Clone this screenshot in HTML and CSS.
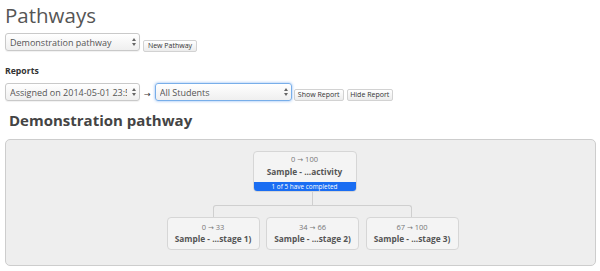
FILE: index.html
```html
<!DOCTYPE html>
<html lang="en">
  <head>
    <meta charset="UTF-8" />
    <title>Pathways</title>
    <link rel="stylesheet" href="styles.css">
  </head>
  <body>
    <h1 class="title">Pathways</h1>

    <div class="row row-pathway">
      <div class="select-wrap wide">
        <select class="select">
          <option>Demonstration pathway</option>
        </select>
        <span class="updown"></span>
      </div>
      <button type="button" class="btn btn-new">New Pathway</button>
    </div>

    <h4 class="label">Reports</h4>

    <div class="row row-report">
      <div class="select-wrap wide">
        <select class="select">
          <option>Assigned on 2014-05-01 23:59</option>
        </select>
        <span class="updown"></span>
      </div>
      <span class="arrow">&rarr;</span>
      <div class="select-wrap students">
        <select class="select focused">
          <option>All Students</option>
        </select>
        <span class="updown"></span>
      </div>
      <button type="button" class="btn btn-show">Show Report</button>
      <button type="button" class="btn btn-hide">Hide Report</button>
    </div>

    <h2 class="pathway-name">Demonstration pathway</h2>

    <div class="panel">
      <div class="tree">
        <div class="node node-root">
          <div class="range">0 <span class="to">&rarr;</span> 100</div>
          <div class="name">Sample - ...activity</div>
          <div class="progress">1 of 5 have completed</div>
        </div>
        <div class="stem"></div>
        <div class="bracket"></div>
        <div class="children">
          <div class="node">
            <div class="range">0 <span class="to">&rarr;</span> 33</div>
            <div class="name">Sample - ...stage 1)</div>
          </div>
          <div class="node">
            <div class="range">34 <span class="to">&rarr;</span> 66</div>
            <div class="name">Sample - ...stage 2)</div>
          </div>
          <div class="node">
            <div class="range">67 <span class="to">&rarr;</span> 100</div>
            <div class="name">Sample - ...stage 3)</div>
          </div>
        </div>
      </div>
    </div>
  </body>
</html>
```

FILE: styles.css
```css
body {
  font-family: "Open Sans", "Liberation Sans", sans-serif;
  color: #555;
  margin: 0;
  padding: 0 4px 0 5px;
  background: #fff;
}
.title {
  font-size: 20.5px;
  font-weight: 400;
  line-height: 28px;
  margin: 0;
  padding-top: 1px;
  color: #555;
}
.row {
  display: flex;
  align-items: flex-end;
}
.row-pathway {
  margin-top: 4px;
  gap: 3px;
}
.row-report {
  margin-top: 6px;
}
.label {
  font-size: 8.7px;
  font-weight: 700;
  line-height: 12px;
  margin: 14px 0 0;
  color: #333;
}
.select-wrap {
  position: relative;
  height: 18px;
}
.select-wrap.wide {
  width: 135px;
}
.select-wrap.students {
  width: 137px;
}
.select {
  display: block;
  appearance: none;
  -webkit-appearance: none;
  width: 100%;
  height: 18px;
  box-sizing: border-box;
  margin: 0;
  padding: 0 12px 0 4px;
  font-family: "Open Sans", "Liberation Sans", sans-serif;
  font-size: 9px;
  color: #555;
  background: linear-gradient(to bottom, #fff 0%, #efefef 100%);
  border: 1px solid #c9c9c9;
  border-radius: 3px;
  box-shadow: 0 1px 1px rgba(0, 0, 0, 0.06);
  outline: none;
}
.select.focused {
  border-color: #78aee9;
  box-shadow: 0 0 3px rgba(82, 150, 236, 0.7);
}
/* the little up/down arrows of a mac select */
.updown {
  position: absolute;
  right: 4px;
  top: 5px;
  width: 4px;
  height: 8px;
}
.updown::before,
.updown::after {
  content: "";
  position: absolute;
  left: 0;
  border-left: 2px solid transparent;
  border-right: 2px solid transparent;
}
.updown::before {
  top: 0;
  border-bottom: 3px solid #666;
}
.updown::after {
  bottom: 0;
  border-top: 3px solid #666;
}
.arrow {
  font-family: "DejaVu Sans", sans-serif;
  font-size: 8px;
  line-height: 12px;
  color: #333;
  margin: 0 4px;
}
.to {
  font-family: "DejaVu Sans", sans-serif;
  font-size: 7px;
}
.btn {
  display: block;
  font-family: "Open Sans", "Liberation Sans", sans-serif;
  font-size: 7px;
  line-height: 10px;
  color: #333;
  height: 12px;
  padding: 0;
  margin: 0;
  white-space: nowrap;
  background: linear-gradient(to bottom, #fff 0%, #ececec 100%);
  border: 1px solid #d2d2d2;
  border-radius: 2px;
  box-sizing: border-box;
  cursor: pointer;
}
.btn-new {
  width: 54px;
  margin-bottom: -1px;
}
.btn-show {
  width: 50px;
  margin-left: 2px;
}
.btn-hide {
  width: 46px;
  margin-left: 3px;
}
.pathway-name {
  font-size: 15px;
  font-weight: 700;
  line-height: 20px;
  margin: 9px 0 0 4px;
  color: #444;
}
.panel {
  margin-top: 9px;
  height: 127px;
  box-sizing: border-box;
  background: #eee;
  border: 1px solid #cdcdcd;
  border-radius: 5px;
  padding: 11px 0 0 24px;
}
.tree {
  display: flex;
  flex-direction: column;
  align-items: center;
}
.node {
  background: #f4f4f4;
  border: 1px solid #d6d6d6;
  border-radius: 4px;
  box-sizing: border-box;
  text-align: center;
  overflow: hidden;
}
.node-root {
  width: 104px;
  height: 41px;
  margin-right: 16px;
  padding-top: 2px;
}
.range {
  font-size: 7.5px;
  line-height: 11px;
  color: #777;
}
.name {
  font-size: 8.3px;
  font-weight: 700;
  line-height: 11px;
  color: #555;
}
.progress {
  margin-top: 5px;
  height: 10px;
  background: #1a6df2;
  color: #fff;
  font-size: 6.4px;
  line-height: 10px;
}
.stem {
  width: 1px;
  height: 13px;
  background: #cfcfcf;
}
.bracket {
  width: 199px;
  height: 12px;
  box-sizing: border-box;
  border: 1px solid #cfcfcf;
  border-bottom: none;
  border-radius: 3px 3px 0 0;
}
.children {
  display: flex;
  gap: 6.5px;
}
.children .node {
  width: 93px;
  height: 33px;
  padding-top: 4px;
}
.children .range {
  line-height: 10px;
}
```
